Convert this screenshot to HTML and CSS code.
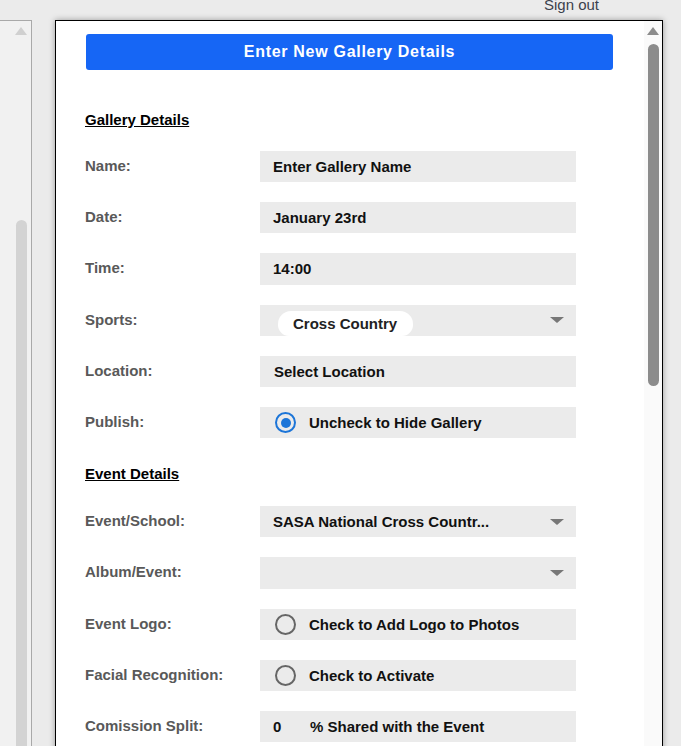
FILE: index.html
```html
<!DOCTYPE html>
<html>
<head>
<meta charset="utf-8">
<link rel="stylesheet" href="styles.css">
</head>
<body>
<div class="topbar"><span class="signout">Sign out</span></div>
<div class="main">
  <div class="sidepanel">
    <div class="side-arrow"></div>
    <div class="side-thumb"></div>
  </div>
  <div class="dialog">
    <div class="content">
      <div class="primary-btn">Enter New Gallery Details</div>

      <div class="section-title first">Gallery Details</div>
      <div class="form">
        <div class="label">Name:</div>
        <div class="field"><span class="value">Enter Gallery Name</span></div>

        <div class="label">Date:</div>
        <div class="field"><span class="value">January 23rd</span></div>

        <div class="label">Time:</div>
        <div class="field"><span class="value">14:00</span></div>

        <div class="label">Sports:</div>
        <div class="field">
          <span class="chip">Cross Country</span>
          <span class="caret"></span>
        </div>

        <div class="label">Location:</div>
        <div class="field"><span class="value loc">Select Location</span></div>

        <div class="label">Publish:</div>
        <div class="field">
          <span class="radio checked"></span>
          <span class="radio-text">Uncheck to Hide Gallery</span>
        </div>
      </div>

      <div class="section-title second">Event Details</div>
      <div class="form">
        <div class="label">Event/School:</div>
        <div class="field">
          <span class="value">SASA National Cross Countr...</span>
          <span class="caret"></span>
        </div>

        <div class="label">Album/Event:</div>
        <div class="field"><span class="caret"></span></div>

        <div class="label">Event Logo:</div>
        <div class="field">
          <span class="radio"></span>
          <span class="radio-text">Check to Add Logo to Photos</span>
        </div>

        <div class="label">Facial Recognition:</div>
        <div class="field">
          <span class="radio"></span>
          <span class="radio-text">Check to Activate</span>
        </div>

        <div class="label">Comission Split:</div>
        <div class="field">
          <span class="value num">0</span>
          <span class="suffix">% Shared with the Event</span>
        </div>
      </div>
    </div>
    <div class="vscroll">
      <div class="vs-arrow"></div>
      <div class="vs-thumb"></div>
    </div>
  </div>
</div>
</body>
</html>
```

FILE: styles.css
```css
html, body {
  margin: 0;
  padding: 0;
}
body {
  background: #ebebeb;
  font-family: "Liberation Sans", Arial, sans-serif;
  width: 681px;
  height: 746px;
  overflow: hidden;
}
.topbar {
  height: 20px;
  display: flex;
  justify-content: flex-end;
  padding-right: 82px;
  overflow: hidden;
}
.signout {
  font-size: 15px;
  line-height: 17px;
  color: #3b414d;
  margin-top: -4px;
}
.main {
  display: flex;
  height: 726px;
}
.sidepanel {
  width: 32px;
  box-sizing: border-box;
  background: #f1f1f1;
  border-top: 1px solid #a9a9a9;
  border-right: 1px solid #a9a9a9;
  display: flex;
  flex-direction: column;
  align-items: flex-start;
  padding-left: 15px;
}
.side-arrow {
  margin-top: 6px;
  width: 0;
  height: 0;
  border-left: 6px solid transparent;
  border-right: 6px solid transparent;
  border-bottom: 8px solid #d0d0d0;
}
.side-thumb {
  margin-top: 185px;
  margin-left: 1px;
  width: 11px;
  flex: 1;
  background: #d3d3d3;
  border-radius: 6px 6px 0 0;
}
.dialog {
  margin-left: 23px;
  width: 608px;
  height: 740px;
  box-sizing: border-box;
  border: 1px solid #000;
  background: #fff;
  box-shadow: 0 0 6px rgba(0, 0, 0, 0.35);
  display: flex;
}
.content {
  flex: 1;
  padding: 13px 0 0 29px;
}
.primary-btn {
  margin-left: 1px;
  width: 527px;
  height: 36px;
  background: #1666f5;
  border-radius: 3px;
  color: #fff;
  font-weight: bold;
  font-size: 16px;
  letter-spacing: 0.7px;
  line-height: 36px;
  text-align: center;
}
.section-title {
  font-size: 15px;
  line-height: 17px;
  font-weight: bold;
  color: #000;
  text-decoration: underline;
}
.section-title.first {
  margin-top: 41px;
  margin-bottom: 23px;
}
.section-title.second {
  margin-top: 27px;
  margin-bottom: 24px;
}
.form {
  display: grid;
  grid-template-columns: 175px 316px;
  grid-auto-rows: 31.2px;
  row-gap: 20px;
}
.label {
  font-size: 15px;
  line-height: 17px;
  font-weight: bold;
  color: #595959;
  margin-top: 6px;
}
.field {
  background: #ebebeb;
  display: flex;
  align-items: center;
  font-size: 15px;
  font-weight: bold;
  color: #111;
  overflow: hidden;
}
.value {
  padding-left: 13px;
  line-height: 17px;
}
.value.loc {
  padding-left: 14px;
}
.value.num {
  width: 37px;
}
.suffix {
  line-height: 17px;
}
.chip {
  align-self: flex-end;
  margin-left: 18px;
  height: 25px;
  line-height: 25px;
  padding: 0 16px 0 15px;
  background: #fff;
  border-radius: 13px 13px 11px 11px;
  color: #222;
}
.caret {
  margin-left: auto;
  margin-right: 12px;
  width: 0;
  height: 0;
  border-left: 7px solid transparent;
  border-right: 7px solid transparent;
  border-top: 6px solid #777;
}
.radio {
  margin-left: 15px;
  width: 21px;
  height: 21px;
  box-sizing: border-box;
  border: 2px solid #666;
  border-radius: 50%;
  flex: none;
  display: flex;
  align-items: center;
  justify-content: center;
}
.radio.checked {
  border-color: #1c75d8;
}
.radio.checked::after {
  content: "";
  width: 10px;
  height: 10px;
  border-radius: 50%;
  background: #1c75d8;
}
.radio-text {
  margin-left: 13px;
  line-height: 17px;
}
.vscroll {
  width: 18px;
  background: #fafafa;
  display: flex;
  flex-direction: column;
  align-items: center;
}
.vs-arrow {
  margin-top: 6px;
  width: 0;
  height: 0;
  border-left: 6px solid transparent;
  border-right: 6px solid transparent;
  border-bottom: 8px solid #8c8c8c;
}
.vs-thumb {
  margin-top: 9px;
  width: 11px;
  height: 342px;
  background: #8c8c8c;
  border-radius: 6px;
}
```
